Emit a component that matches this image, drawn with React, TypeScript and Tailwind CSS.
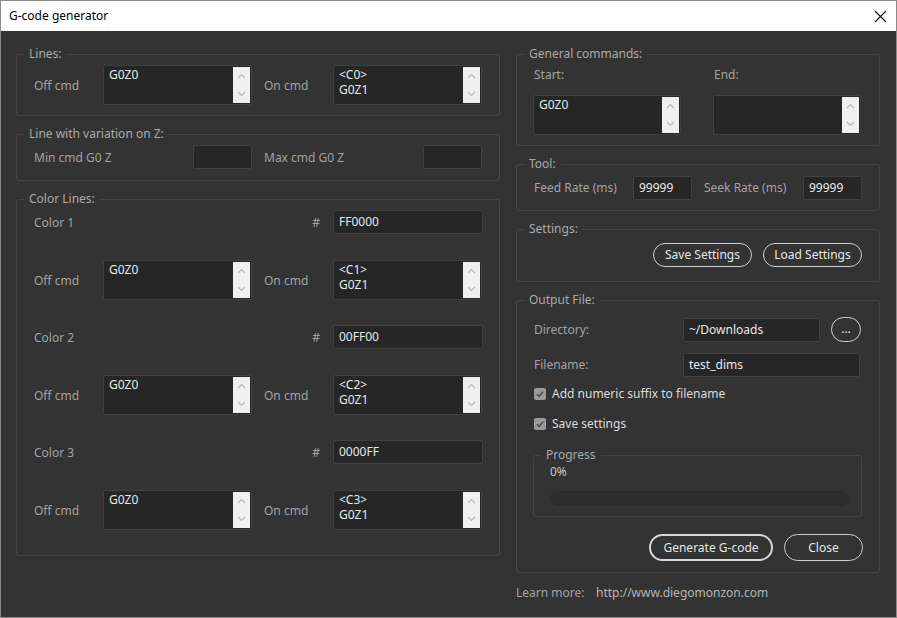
import React from 'react';

const font = { fontFamily: '"Noto Sans", "Open Sans", sans-serif' };

const Group: React.FC<{ label: string; className?: string; children: React.ReactNode }> = ({
  label,
  className = '',
  children,
}) => (
  <fieldset className={`border border-[#464646] rounded-[3px] px-[7px] ${className}`}>
    <legend className="px-[5px] text-[12px] leading-[16px] text-[#a9a9a9]">{label}</legend>
    {children}
  </fieldset>
);

const Chevrons = () => (
  <div className="absolute top-px bottom-px right-px w-[17px] bg-[#f0f0f0] flex flex-col justify-between items-center py-[6px]">
    <svg width="9" height="6" viewBox="0 0 9 6">
      <polyline points="1,5 4.5,1.5 8,5" fill="none" stroke="#b8b8b8" strokeWidth="1.2" />
    </svg>
    <svg width="9" height="6" viewBox="0 0 9 6">
      <polyline points="1,1 4.5,4.5 8,1" fill="none" stroke="#b8b8b8" strokeWidth="1.2" />
    </svg>
  </div>
);

const TextBox: React.FC<{ text: string; w?: string; h?: string }> = ({ text, w = 'w-[149px]', h = 'h-[40px]' }) => (
  <div className={`relative ${w} ${h} shrink-0 bg-[#262626] border border-[#404040] rounded-[2px]`}>
    <div className="pl-[5px] pt-[1px] text-[12px] leading-[15px] text-[#e8e8e8] whitespace-pre">{text}</div>
    <Chevrons />
  </div>
);

const Input: React.FC<{ value?: string; w: string }> = ({ value = '', w }) => (
  <div
    className={`${w} h-[24px] shrink-0 bg-[#262626] border border-[#404040] rounded-[2px] pl-[5px] text-[12px] leading-[22px] text-[#e8e8e8]`}
  >
    {value}
  </div>
);

const Pill: React.FC<{ label: string; w: string; h?: string; thick?: boolean }> = ({ label, w, h = 'h-[24px]', thick }) => (
  <button
    className={`${w} ${h} rounded-full ${thick ? 'border-2 border-[#d8d8d8]' : 'border border-[#cfcfcf]'} text-[12px] text-[#e6e6e6] flex items-center justify-center`}
  >
    {label}
  </button>
);

const Label: React.FC<{ children: React.ReactNode; className?: string }> = ({ children, className = '' }) => (
  <span className={`text-[12px] leading-[16px] text-[#a2a2a2] ${className}`}>{children}</span>
);

const CmdRow: React.FC<{ off: string; on: string }> = ({ off, on }) => (
  <div className="flex items-center h-[40px]">
    <Label className="w-[69px] pt-[2px]">Off cmd</Label>
    <TextBox text={off} />
    <Label className="w-[69px] ml-[12px] pt-[2px]">On cmd</Label>
    <TextBox text={on} />
  </div>
);

const ColorRow: React.FC<{ name: string; hex: string }> = ({ name, hex }) => (
  <div className="flex items-center h-[24px]">
    <Label className="flex-1 pt-px">{name}</Label>
    <Label className="mr-[13px] pt-px">#</Label>
    <Input value={hex} w="w-[150px]" />
  </div>
);

const Check: React.FC<{ label: string }> = ({ label }) => (
  <div className="flex items-center h-[16px] pl-px">
    <div className="w-[12px] h-[12px] rounded-[2px] bg-[#9a9a9a] flex items-center justify-center">
      <svg width="10" height="10" viewBox="0 0 10 10">
        <polyline points="2,5.2 4.2,7.4 8,2.8" fill="none" stroke="#4e4e4e" strokeWidth="1.5" />
      </svg>
    </div>
    <span className="ml-[6px] text-[12px] text-[#dcdcdc]">{label}</span>
  </div>
);

export default function App() {
  return (
    <div className="w-[897px] h-[618px] bg-[#333333] border border-[#8a8a8a] flex flex-col overflow-hidden" style={font}>
      <div className="h-[30px] bg-white flex items-center justify-between pl-[8px] pr-[9px] shrink-0">
        <span className="text-[12px] text-black">G-code generator</span>
        <svg width="13" height="13" viewBox="0 0 13 13">
          <path d="M1 1 L12 12 M12 1 L1 12" stroke="#111" strokeWidth="1.1" />
        </svg>
      </div>

      <div className="flex gap-[16px] pl-[15px] pr-[16px] pt-[15px]">
        {/* left column */}
        <div className="w-[484px] flex flex-col">
          <Group label="Lines:">
            <div className="pl-[10px] pr-[10px] pt-[3px] pb-[10px]">
              <CmdRow off="G0Z0" on={'<C0>\nG0Z1'} />
            </div>
          </Group>

          <Group label="Line with variation on Z:" className="mt-[10px]">
            <div className="flex items-center pl-[10px] pr-[10px] pt-[3px] pb-[11px]">
              <Label className="flex-1 pt-px">Min cmd G0 Z</Label>
              <Input w="w-[59px]" />
              <Label className="flex-1 ml-[12px] pt-px">Max cmd G0 Z</Label>
              <Input w="w-[59px]" />
            </div>
          </Group>

          <Group label="Color Lines:" className="mt-[10px]">
            <div className="flex flex-col pl-[10px] pr-[9px] pt-[3px] pb-[25px]">
              <ColorRow name="Color 1" hex="FF0000" />
              <div className="mt-[26px]">
                <CmdRow off="G0Z0" on={'<C1>\nG0Z1'} />
              </div>
              <div className="mt-[25px]">
                <ColorRow name="Color 2" hex="00FF00" />
              </div>
              <div className="mt-[26px]">
                <CmdRow off="G0Z0" on={'<C2>\nG0Z1'} />
              </div>
              <div className="mt-[25px]">
                <ColorRow name="Color 3" hex="0000FF" />
              </div>
              <div className="mt-[26px]">
                <CmdRow off="G0Z0" on={'<C3>\nG0Z1'} />
              </div>
            </div>
          </Group>
        </div>

        {/* right column */}
        <div className="w-[364px] flex flex-col">
          <Group label="General commands:">
            <div className="flex gap-[32px] pl-[9px] pr-[10px] pt-[5px] pb-[10px]">
              <div className="flex flex-col">
                <Label className="pl-px">Start:</Label>
                <div className="mt-[12px]">
                  <TextBox text="G0Z0" w="w-[148px]" />
                </div>
              </div>
              <div className="flex flex-col">
                <Label className="pl-px">End:</Label>
                <div className="mt-[12px]">
                  <TextBox text="" w="w-[148px]" />
                </div>
              </div>
            </div>
          </Group>

          <Group label="Tool:" className="mt-[10px]">
            <div className="flex items-center pl-[9px] pr-[10px] pt-[4px] pb-[10px]">
              <Label className="flex-1 pl-px">Feed Rate (ms)</Label>
              <Input value="99999" w="w-[59px]" />
              <Label className="flex-1 ml-[12px]">Seek Rate (ms)</Label>
              <Input value="99999" w="w-[59px]" />
            </div>
          </Group>

          <Group label="Settings:" className="mt-[10px]">
            <div className="flex justify-end gap-[11px] pr-[10px] pt-[6px] pb-[14px]">
              <Pill label="Save Settings" w="w-[99px]" />
              <Pill label="Load Settings" w="w-[99px]" />
            </div>
          </Group>

          <Group label="Output File:" className="mt-[10px]">
            <div className="flex flex-col pl-[9px] pr-[10px] pt-[9px] pb-[11px]">
              <div className="flex items-center">
                <Label className="w-[150px] pl-px">Directory:</Label>
                <Input value="~/Downloads" w="w-[137px]" />
                <button className="ml-[11px] w-[30px] h-[25px] rounded-full border border-[#cfcfcf] text-[12px] leading-[12px] text-[#e6e6e6] flex items-center justify-center pb-[2px]">
                  ...
                </button>
              </div>
              <div className="flex items-center mt-[11px]">
                <Label className="w-[150px] pl-px">Filename:</Label>
                <Input value="test_dims" w="w-[177px]" />
              </div>
              <div className="mt-[9px]">
                <Check label="Add numeric suffix to filename" />
              </div>
              <div className="mt-[14px]">
                <Check label="Save settings" />
              </div>
              <fieldset className="mt-[15px] border border-[#464646] rounded-[3px] px-[7px]">
                <legend className="px-[5px] text-[12px] leading-[16px] text-[#a9a9a9]">Progress</legend>
                <div className="pl-[9px] pr-[5px] pt-px pb-[10px]">
                  <div className="text-[12px] leading-[16px] text-[#c8c8c8]">0%</div>
                  <div className="mt-[11px] h-[15px] rounded-full bg-[#2c2c2c]" />
                </div>
              </fieldset>
              <div className="flex justify-end gap-[11px] mt-[17px] -mr-px">
                <Pill label="Generate G-code" w="w-[124px]" h="h-[27px]" thick />
                <Pill label="Close" w="w-[79px]" h="h-[27px]" />
              </div>
            </div>
          </Group>

          <div className="mt-[12px] flex text-[12px] leading-[16px]">
            <span className="w-[80px] text-[#a2a2a2]">Learn more:</span>
            <span className="text-[#b4b4b4]">http://www.diegomonzon.com</span>
          </div>
        </div>
      </div>
    </div>
  );
}
